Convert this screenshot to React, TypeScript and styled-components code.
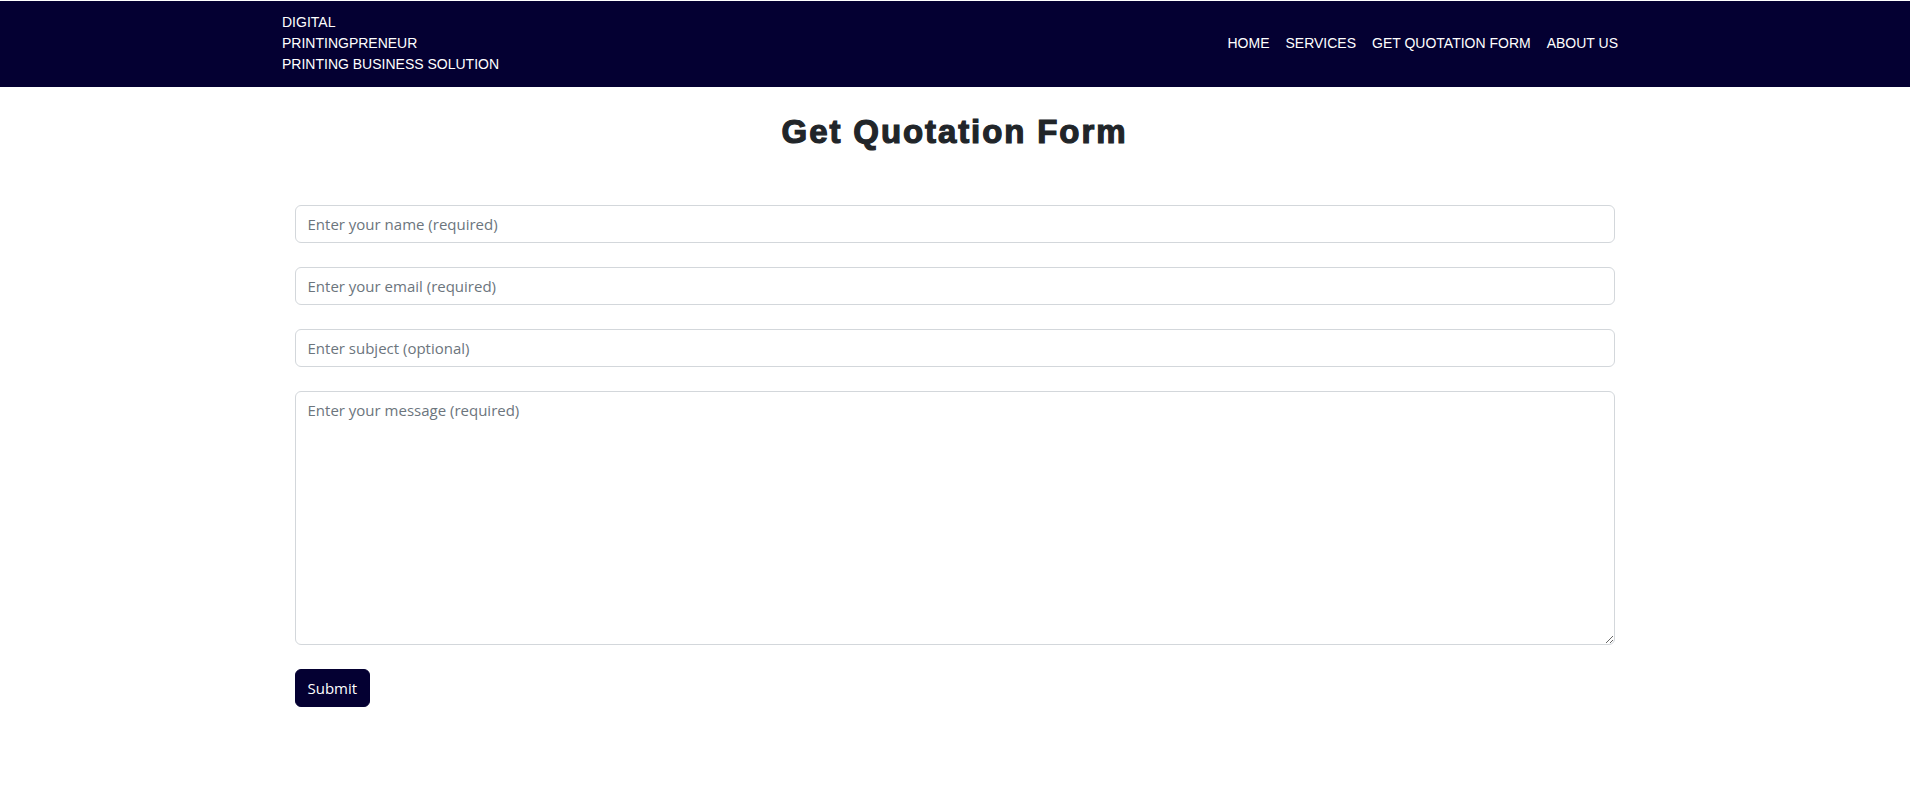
import React from "react";
import styled, { createGlobalStyle } from "styled-components";

const GlobalStyle = createGlobalStyle`
  html, body { margin: 0; padding: 0; background: #ffffff; }
  body { font-family: "Open Sans", "Noto Sans", sans-serif; color: #212529; }
  * { box-sizing: border-box; }
`;

const NAVY = "#040032";

const Page = styled.div`
  margin-right: 9px;
  padding-top: 1px;
`;

const Header = styled.header`
  background: ${NAVY};
  padding: 11px 0 12px;
`;

const HeaderInner = styled.div`
  display: flex;
  align-items: center;
  justify-content: space-between;
  margin: 0 292px 0 282px;
`;

const Brand = styled.div`
  display: flex;
  flex-direction: column;
  font-family: "Liberation Sans", Arial, sans-serif;
  font-size: 14px;
  line-height: 21px;
  color: #ffffff;
`;

const Nav = styled.nav`
  display: flex;
  gap: 16px;
  padding-bottom: 1px;
`;

const NavLink = styled.a`
  font-family: "Liberation Sans", Arial, sans-serif;
  font-size: 14px;
  line-height: 21px;
  color: #ffffff;
  text-decoration: none;
`;

const Main = styled.main`
  width: 1321px;
  margin: 0 auto;
  padding-right: 1px;
`;

const Title = styled.h2`
  margin: 25px 0 53px;
  text-align: center;
  font-family: "Liberation Sans", Arial, sans-serif;
  font-weight: 700;
  font-size: 33px;
  line-height: 1.2;
  letter-spacing: 1.9px;
  -webkit-text-stroke: 1.2px #212529;
  color: #212529;
`;

const Form = styled.form`
  display: flex;
  flex-direction: column;
  gap: 24px;
`;

const fieldCss = `
  display: block;
  width: 100%;
  padding: 6px 12px;
  font-family: "Open Sans", "Noto Sans", sans-serif;
  font-size: 15px;
  line-height: 24px;
  color: #212529;
  background: #ffffff;
  border: 1px solid #d3d7db;
  border-radius: 6px;
  outline: none;
  &::placeholder { color: #6c757d; opacity: 1; }
`;

const Input = styled.input`
  ${fieldCss}
  height: 38px;
`;

const TextArea = styled.textarea`
  ${fieldCss}
  height: 254px;
  resize: vertical;
`;

const SubmitButton = styled.button`
  align-self: flex-start;
  height: 38px;
  padding: 6px 12px;
  font-family: "Open Sans", "Noto Sans", sans-serif;
  font-size: 15px;
  line-height: 24px;
  color: #ffffff;
  background: ${NAVY};
  border: 1px solid ${NAVY};
  border-radius: 6px;
  cursor: pointer;
`;

export default function App() {
  return (
    <Page>
      <GlobalStyle />
      <Header>
        <HeaderInner>
          <Brand>
            <span>DIGITAL</span>
            <span>PRINTINGPRENEUR</span>
            <span>PRINTING BUSINESS SOLUTION</span>
          </Brand>
          <Nav>
            <NavLink href="#">HOME</NavLink>
            <NavLink href="#">SERVICES</NavLink>
            <NavLink href="#">GET QUOTATION FORM</NavLink>
            <NavLink href="#">ABOUT US</NavLink>
          </Nav>
        </HeaderInner>
      </Header>
      <Main>
        <Title>Get Quotation Form</Title>
        <Form onSubmit={(e) => e.preventDefault()}>
          <Input type="text" placeholder="Enter your name (required)" />
          <Input type="email" placeholder="Enter your email (required)" />
          <Input type="text" placeholder="Enter subject (optional)" />
          <TextArea placeholder="Enter your message (required)" />
          <SubmitButton type="submit">Submit</SubmitButton>
        </Form>
      </Main>
    </Page>
  );
}
